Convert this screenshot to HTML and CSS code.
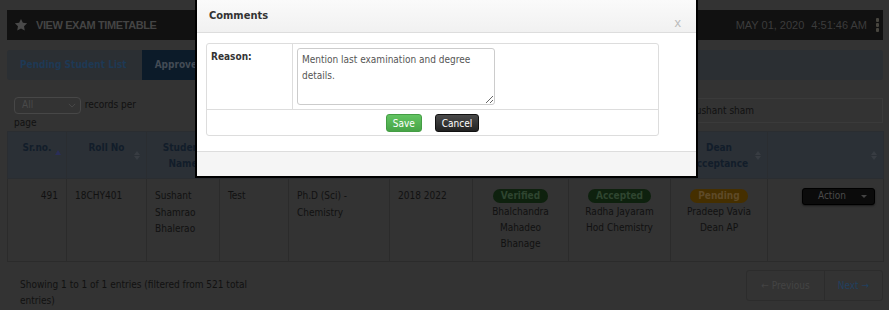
FILE: index.html
```html
<!DOCTYPE html>
<html lang="en">
<head>
    <meta charset="UTF-8">
    <meta name="viewport" content="width=device-width, initial-scale=1.0">
    <title>View Exam Timetable</title>
    <link rel="stylesheet" href="styles.css">
</head>
<body>
    <div class="page">
        <header class="topbar">
            <svg class="star" viewBox="0 0 24 24"><polygon points="12,1.5 15.2,8.1 22.5,9.1 17.2,14.2 18.5,21.5 12,18 5.5,21.5 6.8,14.2 1.5,9.1 8.8,8.1"/></svg>
            <span class="page-title">View Exam Timetable</span>
            <span class="clock"><span>MAY 01, 2020</span><span>4:51:46 AM</span></span>
            <span class="kebab"><i></i><i></i><i></i></span>
        </header>

        <nav class="tabs">
            <a class="tab">Pending Student List</a>
            <a class="tab active">Approved Student List</a>
        </nav>

        <div class="controls">
            <div class="length">
                <span class="select">All
                    <svg viewBox="0 0 10 6"><polyline points="1,1 5,5 9,1"/></svg>
                </span>
                records per page
            </div>
            <input class="search" type="text" value="Sushant sham">
        </div>

        <table class="grid">
            <colgroup>
                <col style="width:59px"><col style="width:80px"><col style="width:73px"><col style="width:69px">
                <col style="width:101px"><col style="width:83px"><col style="width:96px"><col style="width:102px">
                <col style="width:97px"><col style="width:116px">
            </colgroup>
            <thead>
                <tr>
                    <th class="sorting_asc">Sr.no.</th>
                    <th class="sorting">Roll No</th>
                    <th class="sorting">Student Name</th>
                    <th class="sorting">Remark</th>
                    <th class="sorting">Course</th>
                    <th class="sorting">Academic Year</th>
                    <th class="sorting">Verification</th>
                    <th class="sorting">HOD Acceptance</th>
                    <th class="sorting">Dean Acceptance</th>
                    <th class="sorting"></th>
                </tr>
            </thead>
            <tbody>
                <tr>
                    <td class="num">491</td>
                    <td>18CHY401</td>
                    <td>Sushant Shamrao Bhalerao</td>
                    <td>Test</td>
                    <td>Ph.D (Sci) - Chemistry</td>
                    <td>2018 2022</td>
                    <td class="status"><span class="badge verified">Verified</span><br>Bhalchandra Mahadeo Bhanage</td>
                    <td class="status"><span class="badge verified">Accepted</span><br>Radha Jayaram Hod Chemistry</td>
                    <td class="status"><span class="badge pending">Pending</span><br>Pradeep Vavia Dean AP</td>
                    <td>
                        <div class="action"><span class="action-label">Action</span><span class="caret"></span></div>
                    </td>
                </tr>
            </tbody>
        </table>

        <div class="table-footer">
            <div class="info">Showing 1 to 1 of 1 entries (filtered from 521 total entries)</div>
            <ul class="pager">
                <li class="prev">&larr; Previous</li>
                <li class="next">Next &rarr;</li>
            </ul>
        </div>
    </div>

    <div class="modal">
        <div class="modal-header">
            <h4>Comments</h4>
            <span class="close">x</span>
        </div>
        <div class="modal-body">
            <div class="form-box">
                <div class="form-row">
                    <div class="form-label">Reason:</div>
                    <div class="form-field">
                        <textarea>Mention last examination and degree details.</textarea>
                    </div>
                </div>
                <div class="form-actions">
                    <button class="btn btn-save">Save</button>
                    <button class="btn btn-cancel">Cancel</button>
                </div>
            </div>
        </div>
        <div class="modal-footer"></div>
    </div>
</body>
</html>
```

FILE: styles.css
```css
* {
    margin: 0;
    padding: 0;
    box-sizing: border-box;
}

body {
    font-family: "DejaVu Sans Condensed", "Liberation Sans", Arial, sans-serif;
    font-size: 10px;
    color: #111;
    background-color: #333;
    overflow: hidden;
}

/* page under the backdrop (already dimmed colours) */
.page {
    padding: 10px 6px 0 7px;
}

.topbar {
    display: flex;
    align-items: center;
    height: 30px;
    background-color: #111;
    padding: 0 4px 0 7px;
}

.star {
    width: 14px;
    height: 14px;
    fill: #4a4a4a;
}

.page-title {
    margin-left: 8px;
    font-family: "Liberation Sans", Arial, sans-serif;
    font-size: 11px;
    font-weight: bold;
    letter-spacing: -0.4px;
    text-transform: uppercase;
    color: #444;
}

.clock {
    margin-left: auto;
    display: flex;
    gap: 7px;
    font-family: "Liberation Sans", Arial, sans-serif;
    font-size: 11px;
    color: #3c3c3c;
}

.kebab {
    margin-left: 9px;
    display: flex;
    flex-direction: column;
    gap: 1px;
}

.kebab i {
    width: 3px;
    height: 4px;
    border-radius: 1px;
    background-color: #48463f;
}

.tabs {
    display: flex;
    margin-top: 10px;
    height: 30px;
    background-color: #2b2f33;
    border-radius: 3px;
    overflow: hidden;
}

.tab {
    padding: 0 15px 0 13px;
    line-height: 30px;
    font-weight: bold;
    color: #1e3955;
}

.tab.active {
    background-color: #0c1b29;
    color: #434b55;
}

.controls {
    display: flex;
    justify-content: space-between;
    align-items: flex-start;
    height: 51px;
    padding: 16px 0 0 7px;
}

.length {
    width: 140px;
    line-height: 18px;
}

.select {
    display: inline-flex;
    align-items: center;
    justify-content: space-between;
    width: 67px;
    height: 17px;
    padding: 0 4px 0 7px;
    margin-right: 1px;
    border: 1px solid #474747;
    border-radius: 4px;
    color: #4a4a4a;
    vertical-align: middle;
}

.select svg {
    width: 8px;
    height: 5px;
    fill: none;
    stroke: #4a4a4a;
    stroke-width: 1.2;
}

.search {
    width: 200px;
    height: 25px;
    margin-top: 2px;
    padding: 0 6px;
    border: 1px solid #3a3a3a;
    background-color: #333;
    font: inherit;
    color: #111;
}

.grid {
    width: 876px;
    table-layout: fixed;
    border-collapse: collapse;
    border: 1px solid #2b2b2b;
}

.grid th {
    position: relative;
    height: 47px;
    padding: 8px 14px 0;
    vertical-align: top;
    line-height: 16px;
    text-align: center;
    font-weight: bold;
    color: #121d2a;
    background-color: #2b3036;
    border: 1px solid #2a2d31;
}

.grid th.sorting::before,
.grid th.sorting::after,
.grid th.sorting_asc::before {
    content: "";
    position: absolute;
    right: 6px;
    border-left: 3px solid transparent;
    border-right: 3px solid transparent;
}

.grid th.sorting::before {
    top: 19px;
    border-bottom: 4px solid #383c42;
}

.grid th.sorting::after {
    top: 24px;
    border-top: 4px solid #383c42;
}

.grid th.sorting_asc::before {
    top: 18px;
    right: 5px;
    border-bottom: 5px solid #2a2e58;
}

.grid td {
    height: 80px;
    padding: 9px 8px;
    vertical-align: top;
    line-height: 16.5px;
    border: 1px solid #2b2b2b;
}

.grid td.num {
    text-align: right;
}

.grid td.status {
    text-align: center;
    line-height: 16px;
    padding-left: 12px;
    padding-right: 12px;
}

.badge {
    display: inline-block;
    padding: 0 8px;
    line-height: 14px;
    border-radius: 8px;
    font-weight: bold;
}

.badge.verified {
    background-color: #0e210e;
    color: #2f4530;
}

.badge.pending {
    background-color: #452f00;
    color: #5e4a28;
}

.action {
    float: right;
    display: flex;
    align-items: center;
    width: 73px;
    height: 17px;
    border: 1px solid #000;
    border-radius: 3px;
    background-color: #0b0b0b;
    box-shadow: 0 1px 2px rgba(0,0,0,0.5);
    color: #4a4a4a;
}

.action-label {
    width: 58px;
    text-align: center;
}

.caret {
    border-left: 3px solid transparent;
    border-right: 3px solid transparent;
    border-top: 3px solid #444;
}

.table-footer {
    display: flex;
    justify-content: space-between;
    align-items: flex-start;
    padding-top: 8px;
}

.info {
    width: 250px;
    padding: 7px 0 0 13px;
    line-height: 16px;
}

.pager {
    display: flex;
    list-style: none;
    height: 31px;
    border: 1px solid #2c2c2c;
    border-radius: 3px;
}

.pager li {
    padding: 0 13px;
    line-height: 29px;
}

.pager .prev {
    padding: 0 14px;
    color: #444;
}

.pager .next {
    border-left: 1px solid #2c2c2c;
    color: #22405f;
}

/* dialog */
.modal {
    position: absolute;
    top: -2px;
    left: 195px;
    width: 503px;
    background-color: #fff;
    border: 2px solid #000;
    color: #333;
}

.modal-header {
    position: relative;
    height: 33px;
    padding: 8px 12px;
    background: linear-gradient(#fafafa, #f1f1f1);
    border-bottom: 1px solid #ddd;
}

.modal-header h4 {
    font-size: 11px;
    line-height: 16px;
    font-weight: bold;
    color: #333;
}

.close {
    position: absolute;
    top: 16px;
    right: 15px;
    font-family: "Liberation Sans", Arial, sans-serif;
    font-size: 13px;
    line-height: 14px;
    color: #bbb;
}

.modal-body {
    padding: 10px 9px 15px;
}

.form-box {
    width: 453px;
    border: 1px solid #ddd;
    border-radius: 3px;
}

.form-row {
    display: flex;
}

.form-label {
    width: 86px;
    padding: 5px 4px;
    line-height: 16px;
    font-weight: bold;
    border-right: 1px solid #ddd;
}

.form-field {
    padding: 4px;
}

.form-field textarea {
    display: block;
    width: 198px;
    height: 57px;
    padding: 3px 4px;
    border: 1px solid #ccc;
    border-radius: 3px;
    font: inherit;
    line-height: 16px;
    color: #555;
}

.form-actions {
    display: flex;
    justify-content: center;
    gap: 13px;
    padding: 4px 0 3px;
    border-top: 1px solid #ddd;
}

.btn {
    height: 18px;
    padding: 0 6px;
    border-radius: 3px;
    font: inherit;
    color: #fff;
}

.btn-save {
    background: linear-gradient(#62c462, #47a447);
    border: 1px solid #449d44;
}

.btn-cancel {
    background: linear-gradient(#4a4a4a, #222);
    border: 1px solid #111;
}

.modal-footer {
    height: 25px;
    background-color: #f5f5f5;
    border-top: 1px solid #ddd;
}
```
